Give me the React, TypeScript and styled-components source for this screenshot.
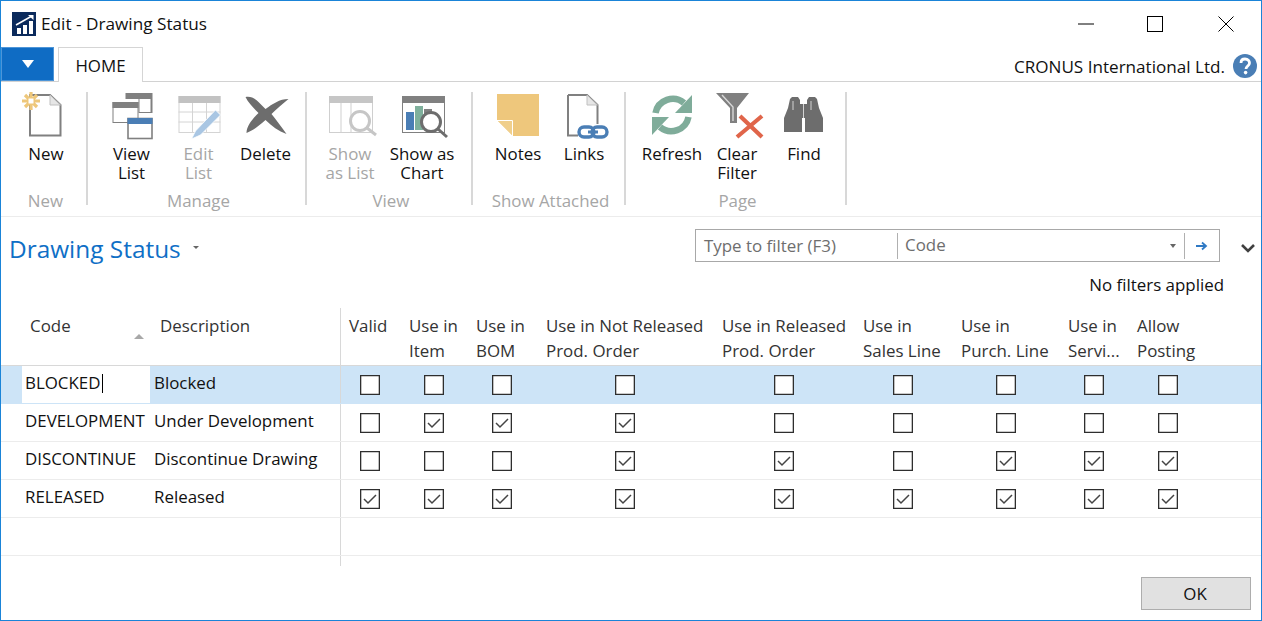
import React from 'react';
import styled, { createGlobalStyle } from 'styled-components';

const GlobalStyle = createGlobalStyle`
  html, body {
    margin: 0;
    padding: 0;
    background: #fff;
    overflow: hidden;
  }
`;

const Window = styled.div`
  box-sizing: border-box;
  width: 1262px;
  height: 621px;
  border: 1px solid #1a84d8;
  display: flex;
  flex-direction: column;
  background: #fff;
  font-family: 'Open Sans', 'Noto Sans', sans-serif;
  font-size: 16.9px;
  color: #111;
  overflow: hidden;
`;

const TitleBar = styled.div`
  height: 46px;
  display: flex;
  align-items: center;
  padding-left: 11px;
  flex-shrink: 0;
`;

const WindowTitle = styled.div`
  margin: 0 0 2px 5px;
  font-size: 17.2px;
  flex: 1;
`;

const WinButton = styled.div<{ $w?: number }>`
  width: ${(p) => p.$w ?? 71}px;
  height: 46px;
  display: flex;
  align-items: center;
  justify-content: center;
`;

const TabRow = styled.div`
  height: 35px;
  box-sizing: border-box;
  display: flex;
  align-items: stretch;
  border-bottom: 1px solid #d2d2d2;
  flex-shrink: 0;
`;

const AppMenu = styled.div`
  box-sizing: border-box;
  width: 53px;
  height: 34px;
  background: #0f6cc4;
  border: 1px solid #4d95d8;
  display: flex;
  align-items: center;
  justify-content: center;
`;

const Tab = styled.div`
  box-sizing: border-box;
  width: 85px;
  height: 35px;
  margin-left: 4px;
  border: 1px solid #d5d5d5;
  border-bottom: none;
  background: #fff;
  display: flex;
  align-items: center;
  justify-content: center;
`;

const Company = styled.div`
  margin-left: auto;
  display: flex;
  align-items: center;
  gap: 8px;
  padding-right: 4px;
  height: 38px;
  font-size: 17.1px;
`;

const Ribbon = styled.div`
  box-sizing: border-box;
  height: 135px;
  padding-top: 10px;
  display: flex;
  align-items: flex-start;
  border-bottom: 1px solid #ececec;
  flex-shrink: 0;
`;

const Group = styled.div<{ $w: number }>`
  box-sizing: border-box;
  width: ${(p) => p.$w}px;
  height: 113px;
  border-right: 2px solid #d8d8d8;
  display: flex;
  flex-direction: column;
`;

const GroupButtons = styled.div<{ $pad: number }>`
  display: flex;
  height: 90px;
  flex-shrink: 0;
  padding-left: ${(p) => p.$pad}px;
`;

const GroupLabel = styled.div`
  margin-top: 9px;
  padding-left: 4px;
  text-align: center;
  line-height: 19px;
  color: #a6a6a6;
  white-space: nowrap;
  flex-shrink: 0;
`;

const RibbonButton = styled.div<{ $w: number; $off?: boolean }>`
  width: ${(p) => p.$w}px;
  flex-shrink: 0;
  display: flex;
  flex-direction: column;
  align-items: center;
  color: ${(p) => (p.$off ? '#a6a6a6' : '#111')};

  svg {
    margin-top: -2px;
    flex-shrink: 0;
  }
`;

const RibbonText = styled.div`
  margin-top: 4px;
  text-align: center;
  line-height: 19px;
  white-space: pre-line;
`;

const PageHead = styled.div`
  height: 59px;
  display: flex;
  align-items: flex-start;
  padding-left: 8px;
  flex-shrink: 0;
`;

const PageTitle = styled.div`
  margin-top: 15px;
  font-size: 24.4px;
  line-height: 34px;
  color: #0f6fc6;
  display: flex;
  align-items: center;
`;

const TitleCaret = styled.span`
  width: 0;
  height: 0;
  margin: 0 0 3px 12px;
  border-left: 3px solid transparent;
  border-right: 3px solid transparent;
  border-top: 3px solid #666;
`;

const FilterBox = styled.div`
  box-sizing: border-box;
  margin: 12px 0 0 auto;
  width: 525px;
  height: 33px;
  border: 1px solid #a8a8a8;
  display: flex;
  align-items: center;
  color: #6e6e6e;
`;

const FilterInput = styled.div`
  box-sizing: border-box;
  width: 202px;
  height: 26px;
  line-height: 25px;
  padding-left: 8px;
  border-right: 1px solid #b0b0b0;
`;

const FilterField = styled.div`
  flex: 1;
  padding-left: 7px;
  height: 26px;
  display: flex;
  align-items: center;
  justify-content: space-between;

  span:first-child {
    line-height: 22px;
    margin-top: -2px;
  }
`;

const FieldCaret = styled.span`
  width: 0;
  height: 0;
  margin-right: 8px;
  border-left: 3.5px solid transparent;
  border-right: 3.5px solid transparent;
  border-top: 4px solid #666;
`;

const FilterGo = styled.div`
  box-sizing: border-box;
  width: 35px;
  height: 26px;
  border-left: 1px solid #b0b0b0;
  display: flex;
  align-items: center;
  justify-content: center;
`;

const Expand = styled.div`
  box-sizing: border-box;
  width: 41px;
  height: 33px;
  margin-top: 12px;
  display: flex;
  align-items: center;
  justify-content: center;
  padding: 4px 0 0 15px;
`;

const FilterNote = styled.div`
  height: 32px;
  line-height: 18px;
  text-align: right;
  padding-right: 37px;
  flex-shrink: 0;
`;

const COLUMNS = '21px 128px 190px 61px 67px 70px 176px 141px 98px 107px 69px 80px 1fr';

const HeaderRow = styled.div`
  display: grid;
  grid-template-columns: ${COLUMNS};
  height: 58px;
  box-sizing: border-box;
  border-bottom: 1px solid #d8d8d8;
  line-height: 25px;
  color: #333;
  flex-shrink: 0;
`;

const HeadCell = styled.div<{ $pad?: number; $rule?: boolean }>`
  position: relative;
  padding: 5px 0 0 ${(p) => p.$pad ?? 8}px;
  white-space: pre-line;
  border-left: ${(p) => (p.$rule ? '1px solid #d8d8d8' : 'none')};
`;

const SortMark = styled.span`
  position: absolute;
  left: 112px;
  top: 26px;
  width: 0;
  height: 0;
  border-left: 5px solid transparent;
  border-right: 5px solid transparent;
  border-bottom: 5px solid #a8a8a8;
`;

const Row = styled.div<{ $active?: boolean }>`
  display: grid;
  grid-template-columns: ${COLUMNS};
  height: 38px;
  box-sizing: border-box;
  border-bottom: 1px solid ${(p) => (p.$active ? '#cde4f7' : '#ececec')};
  background: ${(p) => (p.$active ? '#cde4f7' : '#fff')};
  line-height: 34px;
  flex-shrink: 0;
`;

const TextCell = styled.div<{ $pad: number; $white?: boolean }>`
  padding-left: ${(p) => p.$pad}px;
  background: ${(p) => (p.$white ? '#fff' : 'transparent')};
  white-space: nowrap;
  overflow: hidden;
`;

const CaretBar = styled.span`
  display: inline-block;
  width: 1px;
  height: 19px;
  margin-left: 1px;
  background: #000;
  vertical-align: -4px;
`;

const CheckCell = styled.div<{ $rule?: boolean }>`
  display: flex;
  align-items: center;
  justify-content: center;
  padding: 1px 2px 0 0;
  border-left: ${(p) => (p.$rule ? '1px solid #d8d8d8' : 'none')};
`;

const Box = styled.span`
  box-sizing: border-box;
  width: 20px;
  height: 20px;
  border: 1px solid #2e2e2e;
  box-shadow: inset 0 0 0 0.3px #2e2e2e;
  background: #fff;
  display: flex;
  align-items: center;
  justify-content: center;
`;

const TailRow = styled.div`
  display: grid;
  grid-template-columns: ${COLUMNS};
  height: 10px;
  flex-shrink: 0;
`;

const TailRule = styled.div`
  grid-column: 4;
  border-left: 1px solid #d8d8d8;
`;

const Footer = styled.div`
  flex: 1;
  display: flex;
  justify-content: flex-end;
  padding: 11px 10px 0 0;
`;

const OkButton = styled.div`
  box-sizing: border-box;
  width: 110px;
  height: 33px;
  padding-right: 2px;
  border: 1px solid #adadad;
  background: #e1e1e1;
  display: flex;
  align-items: center;
  justify-content: center;
`;

const AppLogo = () => (
  <svg width="24" height="24" viewBox="0 0 24 24">
    <rect width="24" height="24" fill="#0b2a5c" />
    <path d="M4 13 L19 4.5" stroke="#fff" strokeWidth="1.5" fill="none" />
    <path d="M16 3 H21.5 V8 Z" fill="#fff" />
    <rect x="5" y="16" width="4" height="6" fill="#fff" />
    <rect x="11" y="13" width="4" height="9" fill="#fff" />
    <rect x="17" y="9" width="4" height="13" fill="#fff" />
  </svg>
);

const NewIcon = () => (
  <svg width="60" height="50" viewBox="16 90 60 50">
    <path d="M30 95 H50 L60.5 105 V135.5 H30 Z" fill="#fff" stroke="#808080" strokeWidth="2" />
    <path d="M50 95 V105 H60.5 Z" fill="#e6e6e6" stroke="#c0c0c0" strokeWidth="1" />
    <path d="M31 92 V110 M22 101 H40 M25 95 L37 107 M37 95 L25 107" stroke="#eec77a" strokeWidth="3.2" />
    <rect x="28.5" y="98.5" width="5" height="5" fill="#fff" />
  </svg>
);

const ViewListIcon = () => (
  <svg width="60" height="50" viewBox="101.5 90 60 50">
    <path d="M125 93 H152 V113 H138 V99 H125 Z" fill="#808080" />
    <rect x="139" y="99" width="11" height="13" fill="#fff" />
    <rect x="112.5" y="102.5" width="25" height="20" fill="#fff" stroke="#808080" />
    <rect x="112" y="102" width="26" height="6" fill="#808080" />
    <rect x="127.5" y="118.5" width="24" height="20" fill="#fff" stroke="#808080" strokeWidth="1.6" />
    <rect x="127" y="118" width="25" height="6" fill="#4a7eb5" />
  </svg>
);

const EditListIcon = () => (
  <svg width="60" height="50" viewBox="168.5 90 60 50">
    <rect x="178.5" y="96.5" width="41" height="36" fill="#fff" stroke="#d4d4d4" />
    <rect x="178" y="96" width="42" height="7" fill="#c2c2c2" />
    <path d="M178 112 H220 M178 122 H220 M192 103 V132 M206 103 V132" stroke="#d4d4d4" />
    <path d="M191 139 L195 131 L215 110 L220 115 L200 135 Z" fill="#a9c6e3" stroke="#fff" strokeWidth="0.8" />
  </svg>
);

const DeleteIcon = () => (
  <svg width="60" height="50" viewBox="235.5 90 60 50">
    <path
      d="M245 97 C250 96 254 98 258 102 L265 109 C272 104 279 99 288 99 C282 104 276 109 271 114 C276 120 281 127 286 134 C278 131 271 126 265 120 C259 125 254 130 246 133 C246 126 252 119 258 113 C253 108 248 103 245 97 Z"
      fill="#6d6d6d"
    />
  </svg>
);

const ShowListIcon = () => (
  <svg width="60" height="50" viewBox="320 90 60 50">
    <rect x="329.5" y="96.5" width="43" height="36" fill="#fff" stroke="#cfcfcf" />
    <rect x="329" y="96" width="44" height="7" fill="#c6c6c6" />
    <path d="M341 103 V132 M351 103 V132" stroke="#cfcfcf" />
    <circle cx="360" cy="121" r="9.5" fill="#fff" stroke="#c6c6c6" strokeWidth="3" />
    <path d="M367 128 L376 135" stroke="#c6c6c6" strokeWidth="3" />
  </svg>
);

const ShowChartIcon = () => (
  <svg width="60" height="50" viewBox="392 90 60 50">
    <rect x="402.5" y="96.5" width="42" height="36" fill="#fff" stroke="#808080" />
    <rect x="402" y="96" width="43" height="7" fill="#808080" />
    <rect x="406" y="112" width="8" height="18" fill="#4a7eb5" />
    <rect x="415" y="106" width="8" height="24" fill="#7fb09c" />
    <rect x="424" y="109" width="8" height="8" fill="#808080" />
    <circle cx="431" cy="122" r="9.5" fill="#fff" stroke="#6d6d6d" strokeWidth="3" />
    <path d="M438 129 L447 137" stroke="#6d6d6d" strokeWidth="3" />
  </svg>
);

const NotesIcon = () => (
  <svg width="60" height="50" viewBox="488 90 60 50">
    <path d="M497 94 H539 V136 H513 L497 120 Z" fill="#eec77c" />
    <path d="M497 120.5 H512.5 V136" fill="none" stroke="#fff" strokeWidth="1" />
    <path d="M498 121 H512 V135 Z" fill="#f0cf8c" />
  </svg>
);

const LinksIcon = () => (
  <svg width="60" height="50" viewBox="554 90 60 50">
    <path d="M568 95 H587 L597.5 105 V124 M578 135.5 H568 V95" fill="#fff" stroke="#808080" strokeWidth="2" />
    <path d="M587 95 V105 H597.5 Z" fill="#e6e6e6" stroke="#c0c0c0" strokeWidth="1" />
    <rect x="579" y="127" width="15" height="10" rx="5" fill="none" stroke="#4a7eb5" strokeWidth="3.4" />
    <rect x="592" y="127" width="15" height="10" rx="5" fill="none" stroke="#4a7eb5" strokeWidth="3.4" />
    <path d="M588 132 H598" stroke="#4a7eb5" strokeWidth="3" />
  </svg>
);

const RefreshIcon = () => (
  <svg width="60" height="50" viewBox="642 90 60 50">
    <g fill="none" stroke="#7fac9a" strokeWidth="6.5">
      <path d="M655.5 113 A17.5 17.5 0 0 1 684 103" />
      <path d="M688.5 117 A17.5 17.5 0 0 1 660 127" />
    </g>
    <path d="M692 95 V113 H675 Z" fill="#7fac9a" />
    <path d="M652 135 V117 H669 Z" fill="#7fac9a" />
  </svg>
);

const ClearFilterIcon = () => (
  <svg width="60" height="50" viewBox="707 90 60 50">
    <path d="M716 93 H749 L737 108 V123 H730 V108 Z" fill="#808080" />
    <path d="M722 95 L733 107 V121" fill="none" stroke="#d8d8d8" strokeWidth="1.4" />
    <path d="M740 116 L762 137 M762 116 L737 137" stroke="#e0654a" strokeWidth="4.2" />
  </svg>
);

const FindIcon = () => (
  <svg width="60" height="50" viewBox="775 90 60 50">
    <path
      d="M791 99 L793 97 H799 L801 100 V104 H808 V100 L810 97 H816 L818 99 L820 108 L824 118 V132 H806 V118 H803 V132 H785 V118 L789 108 Z"
      fill="#6d6d6d"
    />
    <path d="M804.5 104 V118 M794 101 V110 M812 101 V110" stroke="#fff" strokeWidth="1" opacity="0.7" />
  </svg>
);

const HelpIcon = () => (
  <svg width="24" height="24" viewBox="0 0 24 24">
    <circle cx="12" cy="12" r="12" fill="#4a7eb5" />
    <path d="M8 9 C8 6 10 5 12 5 C15 5 16.5 7 16.5 9 C16.5 12 13 12 13 15" fill="none" stroke="#fff" strokeWidth="2.8" />
    <circle cx="12.6" cy="18.6" r="1.8" fill="#fff" />
  </svg>
);

const CheckMark = () => (
  <svg width="14" height="12" viewBox="0 0 14 12">
    <path d="M1 6 L5 10 L13 2" fill="none" stroke="#444" strokeWidth="1.5" />
  </svg>
);

const groups = [
  {
    label: 'New',
    w: 87,
    pad: 4,
    buttons: [{ text: 'New', w: 82, icon: <NewIcon /> }],
  },
  {
    label: 'Manage',
    w: 219,
    pad: 10,
    buttons: [
      { text: 'View\nList', w: 67, icon: <ViewListIcon /> },
      { text: 'Edit\nList', w: 67, off: true, icon: <EditListIcon /> },
      { text: 'Delete', w: 67, icon: <DeleteIcon /> },
    ],
  },
  {
    label: 'View',
    w: 166,
    pad: 7,
    buttons: [
      { text: 'Show\nas List', w: 72, off: true, icon: <ShowListIcon /> },
      { text: 'Show as\nChart', w: 72, icon: <ShowChartIcon /> },
    ],
  },
  {
    label: 'Show Attached',
    w: 153,
    pad: 12,
    buttons: [
      { text: 'Notes', w: 66, icon: <NotesIcon /> },
      { text: 'Links', w: 66, icon: <LinksIcon /> },
    ],
  },
  {
    label: 'Page',
    w: 221,
    pad: 13,
    buttons: [
      { text: 'Refresh', w: 66, icon: <RefreshIcon /> },
      { text: 'Clear\nFilter', w: 64, icon: <ClearFilterIcon /> },
      { text: 'Find', w: 70, icon: <FindIcon /> },
    ],
  },
];

const headers = [
  'Valid',
  'Use in\nItem',
  'Use in\nBOM',
  'Use in Not Released\nProd. Order',
  'Use in Released\nProd. Order',
  'Use in\nSales Line',
  'Use in\nPurch. Line',
  'Use in\nServi...',
  'Allow\nPosting',
];

const rows = [
  { code: 'BLOCKED', description: 'Blocked', flags: [0, 0, 0, 0, 0, 0, 0, 0, 0] },
  { code: 'DEVELOPMENT', description: 'Under Development', flags: [0, 1, 1, 1, 0, 0, 0, 0, 0] },
  { code: 'DISCONTINUE', description: 'Discontinue Drawing', flags: [0, 0, 0, 1, 1, 0, 1, 1, 1] },
  { code: 'RELEASED', description: 'Released', flags: [1, 1, 1, 1, 1, 1, 1, 1, 1] },
];

const App: React.FC = () => {
  return (
    <Window>
      <GlobalStyle />
      <TitleBar>
        <AppLogo />
        <WindowTitle>Edit - Drawing Status</WindowTitle>
        <WinButton $w={67}>
          <svg width="16" height="2" viewBox="0 0 16 2">
            <path d="M0 1 H16" stroke="#000" />
          </svg>
        </WinButton>
        <WinButton>
          <svg width="16" height="16" viewBox="0 0 16 16">
            <rect x="0.5" y="0.5" width="15" height="15" fill="none" stroke="#000" />
          </svg>
        </WinButton>
        <WinButton>
          <svg width="16" height="16" viewBox="0 0 16 16">
            <path d="M0.5 0.5 L15.5 15.5 M15.5 0.5 L0.5 15.5" stroke="#000" />
          </svg>
        </WinButton>
      </TitleBar>

      <TabRow>
        <AppMenu>
          <svg width="12" height="8" viewBox="0 0 12 8">
            <path d="M0 0 H12 L6 8 Z" fill="#fff" />
          </svg>
        </AppMenu>
        <Tab>HOME</Tab>
        <Company>
          CRONUS International Ltd.
          <HelpIcon />
        </Company>
      </TabRow>

      <Ribbon>
        {groups.map((group) => (
          <Group key={group.label} $w={group.w}>
            <GroupButtons $pad={group.pad}>
              {group.buttons.map((button) => (
                <RibbonButton key={button.text} $w={button.w} $off={button.off}>
                  {button.icon}
                  <RibbonText>{button.text}</RibbonText>
                </RibbonButton>
              ))}
            </GroupButtons>
            <GroupLabel>{group.label}</GroupLabel>
          </Group>
        ))}
      </Ribbon>

      <PageHead>
        <PageTitle>
          Drawing Status
          <TitleCaret />
        </PageTitle>
        <FilterBox>
          <FilterInput>Type to filter (F3)</FilterInput>
          <FilterField>
            <span>Code</span>
            <FieldCaret />
          </FilterField>
          <FilterGo>
            <svg width="12" height="10" viewBox="0 0 12 10">
              <path d="M0 5 H9 M6 1.5 L10 5 L6 8.5" fill="none" stroke="#2f79c4" strokeWidth="1.8" />
            </svg>
          </FilterGo>
        </FilterBox>
        <Expand>
          <svg width="16" height="10" viewBox="0 0 16 10">
            <path d="M2 2 L8 8 L14 2" fill="none" stroke="#404040" strokeWidth="2.6" />
          </svg>
        </Expand>
      </PageHead>

      <FilterNote>No filters applied</FilterNote>

      <HeaderRow>
        <div />
        <HeadCell>
          Code
          <SortMark />
        </HeadCell>
        <HeadCell $pad={10}>Description</HeadCell>
        {headers.map((header, i) => (
          <HeadCell key={header} $rule={i === 0}>
            {header}
          </HeadCell>
        ))}
      </HeaderRow>

      {rows.map((row, r) => (
        <Row key={row.code} $active={r === 0}>
          <div />
          <TextCell $pad={3} $white={r === 0}>
            {row.code}
            {r === 0 && <CaretBar />}
          </TextCell>
          <TextCell $pad={4}>{row.description}</TextCell>
          {row.flags.map((flag, i) => (
            <CheckCell key={i} $rule={i === 0}>
              <Box>{flag ? <CheckMark /> : null}</Box>
            </CheckCell>
          ))}
        </Row>
      ))}
      <Row>
        <div />
        <div />
        <div />
        <CheckCell $rule />
      </Row>
      <TailRow>
        <TailRule />
      </TailRow>

      <Footer>
        <OkButton>OK</OkButton>
      </Footer>
    </Window>
  );
};

export default App;
